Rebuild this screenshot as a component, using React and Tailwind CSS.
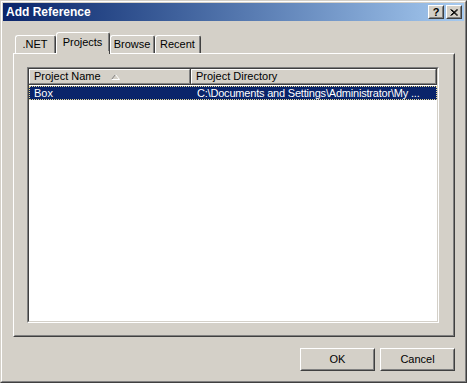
const font = { fontFamily: '"Liberation Sans", Arial, sans-serif' };

const Raised = ({ className = '', children }) => (
  <div className={`border border-t-white border-l-white border-r-[#404040] border-b-[#404040] ${className}`}>
    <div className="w-full h-full border border-t-[#d4d0c8] border-l-[#d4d0c8] border-r-[#808080] border-b-[#808080] flex items-center justify-center">
      {children}
    </div>
  </div>
);

const CaptionButton = ({ children }) => (
  <div className="w-[16px] h-[14px] border border-t-white border-l-white border-r-[#404040] border-b-[#404040] bg-[#d4d0c8]">
    <div className="w-full h-full border border-t-[#d4d0c8] border-l-[#d4d0c8] border-r-[#808080] border-b-[#808080] flex items-center justify-center">
      {children}
    </div>
  </div>
);

const Tab = ({ label, width, selected }) => (
  <div
    className={`${width} rounded-t-[3px] border-l border-t border-r border-l-white border-t-white border-r-[#404040] bg-[#d4d0c8] ${
      selected ? 'h-[22px] -mb-[1px] relative z-10 pb-[3px]' : 'h-[18px]'
    }`}
  >
    <div className="w-full h-full border-r border-r-[#808080] flex items-center justify-center text-[11px] text-black">
      {label}
    </div>
  </div>
);

const SortArrow = () => (
  <svg width="9" height="6" viewBox="0 0 9 6" className="ml-[10px]">
    <path d="M0.5 5.5 L4.5 0.5" stroke="#808080" fill="none" />
    <path d="M4.5 0.5 L8.5 5.5 L0.5 5.5" stroke="#ffffff" fill="none" />
  </svg>
);

const HeaderCell = ({ className = '', children }) => (
  <div className={`h-full border-r border-b border-r-[#404040] border-b-[#404040] ${className}`}>
    <div className="h-full border-t border-l border-r border-b border-t-white border-l-white border-r-[#808080] border-b-[#808080] flex items-center pl-[4px] text-[11px] text-black whitespace-nowrap overflow-hidden">
      {children}
    </div>
  </div>
);

export default function App() {
  return (
    <div style={font} className="w-[467px] h-[383px] bg-[#d4d0c8] select-none">
      <div className="w-full h-full border border-t-[#d4d0c8] border-l-[#d4d0c8] border-r-[#404040] border-b-[#404040]">
        <div className="w-full h-full border border-t-white border-l-white border-r-[#808080] border-b-[#808080] p-[1px] flex flex-col">
          {/* title bar */}
          <div className="h-[18px] flex items-center justify-between bg-gradient-to-r from-[#0a246a] to-[#a6caf0] pl-[3px] pr-[2px]">
            <span className="text-white font-bold text-[12px] leading-none">Add Reference</span>
            <div className="flex gap-[2px]">
              <CaptionButton>
                <span className="text-[11px] font-bold leading-none text-black">?</span>
              </CaptionButton>
              <CaptionButton>
                <svg width="8" height="7" viewBox="0 0 8 7">
                  <path d="M0.5 0.5 L7 6.5 M1.5 0.5 L8 6.5 M7 0.5 L0.5 6.5 M8 0.5 L1.5 6.5" stroke="#000" strokeWidth="1" />
                </svg>
              </CaptionButton>
            </div>
          </div>

          {/* tabs */}
          <div className="ml-[10px] mt-[12px] w-[442px]">
            <div className="flex items-end pl-[2px] h-[20px]">
              <Tab label=".NET" width="w-[41px]" />
              <Tab label="Projects" width="w-[54px]" selected />
              <Tab label="Browse" width="w-[45px]" />
              <Tab label="Recent" width="w-[46px]" />
            </div>

            {/* tab panel */}
            <div className="h-[284px] border border-t-white border-l-white border-r-[#404040] border-b-[#404040]">
              <div className="w-full h-full border border-t-[#d4d0c8] border-l-[#d4d0c8] border-r-[#808080] border-b-[#808080] pl-[12px] pt-[12px]">
                {/* list view */}
                <div className="w-[412px] h-[256px] border border-t-[#808080] border-l-[#808080] border-r-white border-b-white">
                  <div className="w-full h-full border border-t-[#404040] border-l-[#404040] border-r-[#d4d0c8] border-b-[#d4d0c8] bg-white flex flex-col overflow-hidden">
                    <div className="flex h-[16px] bg-[#d4d0c8] shrink-0">
                      <HeaderCell className="w-[162px]">
                        Project Name
                        <SortArrow />
                      </HeaderCell>
                      <HeaderCell className="w-[246px]">Project Directory</HeaderCell>
                    </div>
                    <div className="mt-[1px] h-[14px] bg-[#0a246a] outline-1 outline-dotted outline-[#e8d890] -outline-offset-1 flex items-center text-white text-[11px] whitespace-nowrap">
                      <span className="w-[162px] pl-[5px]">Box</span>
                      <span className="pl-[6px] w-[246px] overflow-hidden tracking-[-0.2px]">
                        C:\Documents and Settings\Administrator\My ...
                      </span>
                    </div>
                  </div>
                </div>
              </div>
            </div>

            {/* buttons */}
            <div className="flex justify-end gap-[5px] mt-[11px]">
              <Raised className="w-[75px] h-[23px]">
                <span className="text-[11px] text-black">OK</span>
              </Raised>
              <Raised className="w-[75px] h-[23px]">
                <span className="text-[11px] text-black">Cancel</span>
              </Raised>
            </div>
          </div>
        </div>
      </div>
    </div>
  );
}
